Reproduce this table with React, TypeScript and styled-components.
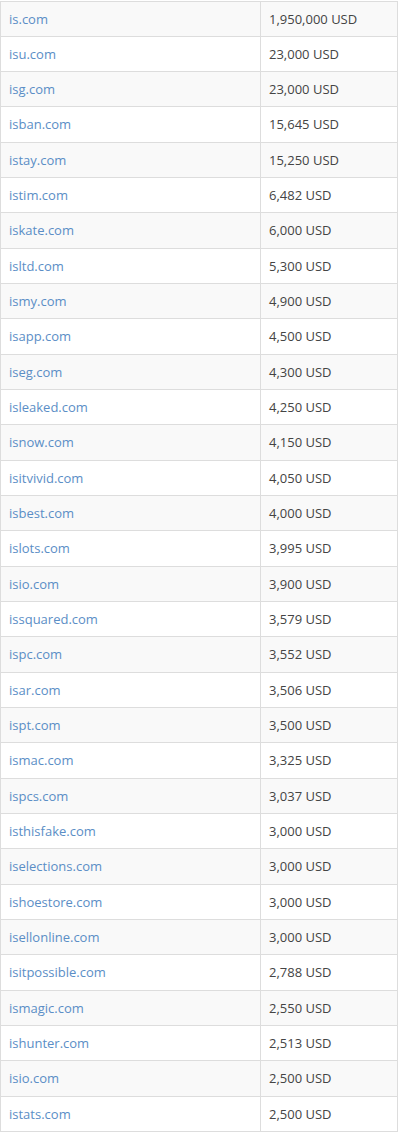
import React from "react";
import styled, { createGlobalStyle } from "styled-components";

const GlobalStyle = createGlobalStyle`
  html, body {
    margin: 0;
    padding: 0;
    background: #ffffff;
  }
  body {
    font-family: "Open Sans", "Liberation Sans", sans-serif;
    font-size: 13px;
    color: #444444;
  }
`;

const Page = styled.div`
  padding-top: 0.5px;
`;

const Table = styled.table`
  width: 398px;
  border-collapse: collapse;
  border: 1px solid #dddddd;
`;

const Row = styled.tr<{ $striped: boolean }>`
  background: ${(p) => (p.$striped ? "#f9f9f9" : "#ffffff")};
`;

const Cell = styled.td<{ $first?: boolean }>`
  border: 1px solid #dddddd;
  padding: 8px;
  height: 18.33px;
  line-height: 18.33px;
  vertical-align: middle;
  width: ${(p) => (p.$first ? "243px" : "auto")};
  color: #444444;
`;

const DomainLink = styled.a`
  color: #5b8ec6;
  text-decoration: none;
`;

const rows: [string, string][] = [
  ["is.com", "1,950,000 USD"],
  ["isu.com", "23,000 USD"],
  ["isg.com", "23,000 USD"],
  ["isban.com", "15,645 USD"],
  ["istay.com", "15,250 USD"],
  ["istim.com", "6,482 USD"],
  ["iskate.com", "6,000 USD"],
  ["isltd.com", "5,300 USD"],
  ["ismy.com", "4,900 USD"],
  ["isapp.com", "4,500 USD"],
  ["iseg.com", "4,300 USD"],
  ["isleaked.com", "4,250 USD"],
  ["isnow.com", "4,150 USD"],
  ["isitvivid.com", "4,050 USD"],
  ["isbest.com", "4,000 USD"],
  ["islots.com", "3,995 USD"],
  ["isio.com", "3,900 USD"],
  ["issquared.com", "3,579 USD"],
  ["ispc.com", "3,552 USD"],
  ["isar.com", "3,506 USD"],
  ["ispt.com", "3,500 USD"],
  ["ismac.com", "3,325 USD"],
  ["ispcs.com", "3,037 USD"],
  ["isthisfake.com", "3,000 USD"],
  ["iselections.com", "3,000 USD"],
  ["ishoestore.com", "3,000 USD"],
  ["isellonline.com", "3,000 USD"],
  ["isitpossible.com", "2,788 USD"],
  ["ismagic.com", "2,550 USD"],
  ["ishunter.com", "2,513 USD"],
  ["isio.com", "2,500 USD"],
  ["istats.com", "2,500 USD"],
];

export default function App() {
  return (
    <Page>
      <GlobalStyle />
      <Table>
        <tbody>
          {rows.map(([domain, price], i) => (
            <Row key={i} $striped={i % 2 === 0}>
              <Cell $first>
                <DomainLink href="#">{domain}</DomainLink>
              </Cell>
              <Cell>{price}</Cell>
            </Row>
          ))}
        </tbody>
      </Table>
    </Page>
  );
}
